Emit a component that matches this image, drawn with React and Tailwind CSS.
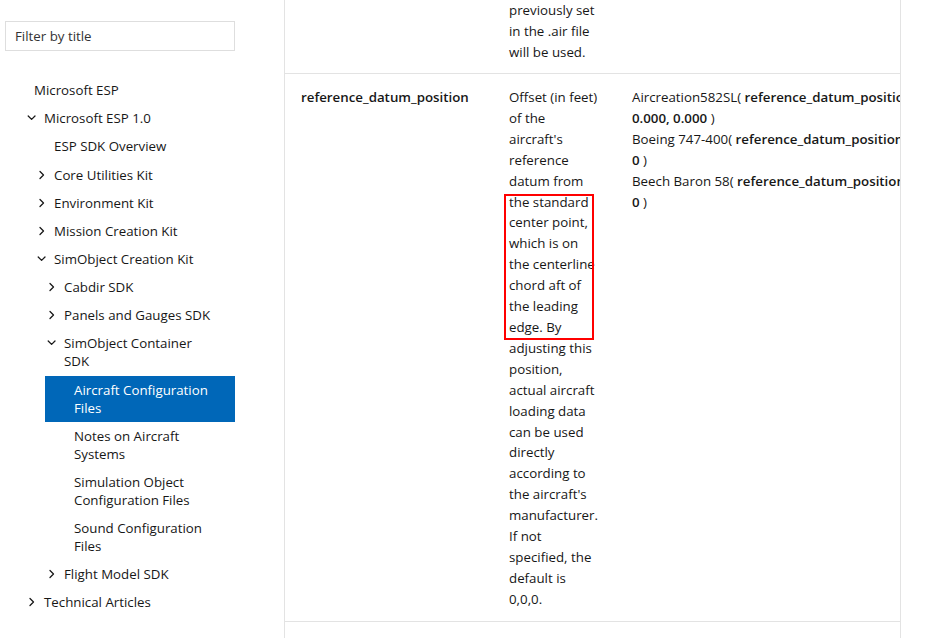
import React from "react";

const font = { fontFamily: '"Open Sans", "Noto Sans", sans-serif' };

function ChevronRight() {
  return (
    <svg width="9" height="18" viewBox="0 0 9 18" fill="none" stroke="#1a1a1a" strokeWidth="1.3" strokeLinecap="round" strokeLinejoin="round">
      <path d="M3 5.5 L6.5 9 L3 12.5" />
    </svg>
  );
}

function ChevronDown() {
  return (
    <svg width="9" height="18" viewBox="0 0 9 18" fill="none" stroke="#1a1a1a" strokeWidth="1.3" strokeLinecap="round" strokeLinejoin="round">
      <path d="M1.2 7 L4.6 10.4 L8 7" />
    </svg>
  );
}

const levelClass = {
  "-1": "ml-0",
  0: "ml-[10px]",
  1: "ml-[20px]",
  2: "ml-[30px]",
  3: "ml-[40px]",
};

const navItems = [
  { t: "Microsoft ESP", l: -1 },
  { t: "Microsoft ESP 1.0", l: 0, c: "down" },
  { t: "ESP SDK Overview", l: 1 },
  { t: "Core Utilities Kit", l: 1, c: "right" },
  { t: "Environment Kit", l: 1, c: "right" },
  { t: "Mission Creation Kit", l: 1, c: "right" },
  { t: "SimObject Creation Kit", l: 1, c: "down" },
  { t: "Cabdir SDK", l: 2, c: "right" },
  { t: "Panels and Gauges SDK", l: 2, c: "right" },
  { t: "SimObject Container SDK", l: 2, c: "down" },
  { t: "Aircraft Configuration Files", l: 3, sel: true },
  { t: "Notes on Aircraft Systems", l: 3 },
  { t: "Simulation Object Configuration Files", l: 3 },
  { t: "Sound Configuration Files", l: 3 },
  { t: "Flight Model SDK", l: 2, c: "right" },
  { t: "Technical Articles", l: 0, c: "right" },
];

const descLines = [
  "Offset (in feet)",
  "of the",
  "aircraft's",
  "reference",
  "datum from",
  "the standard",
  "center point,",
  "which is on",
  "the centerline",
  "chord aft of",
  "the leading",
  "edge. By",
  "adjusting this",
  "position,",
  "actual aircraft",
  "loading data",
  "can be used",
  "directly",
  "according to",
  "the aircraft's",
  "manufacturer.",
  "If not",
  "specified, the",
  "default is",
  "0,0,0.",
];

export default function App() {
  return (
    <div className="flex w-[934px] h-[638px] overflow-hidden bg-white text-[#171717] text-[13.3px]" style={font}>
      {/* Sidebar */}
      <aside className="w-[285px] shrink-0 border-r border-[#e3e3e3] pl-[5px] pt-[21px]">
        <div className="w-[230px] h-[30px] border border-[#dedede] flex items-center pl-[9px] pt-[2px] text-[#333]">
          Filter by title
        </div>
        <ul className="w-[230px] mt-[25px]">
          {navItems.map((it) => (
            <li
              key={it.t}
              className={`${levelClass[it.l]} flex items-start pl-[12px] pr-[18px] py-[5.08px] leading-[18px] ${
                it.sel ? "bg-[#0067b8] text-white" : ""
              }`}
            >
              <span className="w-[9px] h-[18px] shrink-0 mr-[8px] flex items-center">
                {it.c === "right" ? <ChevronRight /> : it.c === "down" ? <ChevronDown /> : null}
              </span>
              <span>{it.t}</span>
            </li>
          ))}
        </ul>
      </aside>

      {/* Main */}
      <main className="w-[616px] shrink-0 border-r border-[#e3e3e3] overflow-hidden">
        <div className="w-[900px]">
          {/* Row 1 (scrolled) */}
          <div className="grid grid-cols-[208px_123px_1fr] border-b border-[#e3e3e3] leading-[21px]">
            <div className="pl-[16px]" />
            <div className="pl-[16px] pb-[10px] whitespace-nowrap">
              <div>previously set</div>
              <div>in the .air file</div>
              <div>will be used.</div>
            </div>
            <div className="pl-[16px]" />
          </div>

          {/* Row 2 */}
          <div className="grid grid-cols-[208px_123px_1fr] border-b border-[#e3e3e3] leading-[20.9px]">
            <div className="pl-[16px] pt-[13px] font-semibold">reference_datum_position</div>
            <div className="relative pl-[16px] pt-[13px] pb-[11px] whitespace-nowrap">
              {descLines.map((l) => (
                <div key={l}>{l}</div>
              ))}
              <div className="absolute left-[11px] top-[120px] w-[90px] h-[146px] border-2 border-[#ff0000]" />
            </div>
            <div className="pl-[16px] pt-[13px] whitespace-nowrap">
              <div>
                Aircreation582SL( <span className="font-semibold">reference_datum_position = 0.000,</span>
              </div>
              <div>
                <span className="font-semibold">0.000, 0.000</span> )
              </div>
              <div>
                Boeing 747-400( <span className="font-semibold">reference_datum_position = 0, 0,</span>
              </div>
              <div>
                <span className="font-semibold">0</span> )
              </div>
              <div>
                Beech Baron 58( <span className="font-semibold">reference_datum_position = 0, 0,</span>
              </div>
              <div>
                <span className="font-semibold">0</span> )
              </div>
            </div>
          </div>

          {/* Row 3 */}
          <div className="h-[40px]" />
        </div>
      </main>
      <div className="flex-1" />
    </div>
  );
}
